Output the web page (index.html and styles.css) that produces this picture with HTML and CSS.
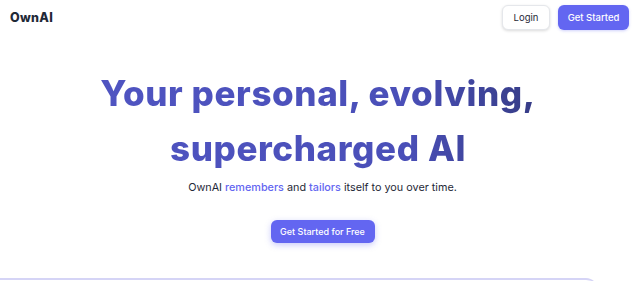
FILE: index.html
```html
<!DOCTYPE html>
<html lang="en">
<head>
	<meta charset="UTF-8">
	<title>OwnAI</title>
	<link rel="stylesheet" href="styles.css">
</head>
<body>
	<div class="nav">
		<div class="logo">OwnAI</div>
		<div class="nav-btns">
			<button class="btn-login">Login</button>
			<button class="btn-start">Get Started</button>
		</div>
	</div>
	<div class="hero">
		<h1 class="title">Your personal, evolving,<br>supercharged AI</h1>
		<p class="sub">OwnAI <span class="hl">remembers</span> and <span class="hl">tailors</span> itself to you over time.</p>
		<button class="btn-free">Get Started for Free</button>
	</div>
	<div class="card"></div>
</body>
</html>
```

FILE: styles.css
```css
body{
	margin: 0; font-family: "Inter", "Noto Sans", sans-serif; background: #fff; color: #1f2937; overflow: hidden; height: 281px;
}
.nav{
	display: flex; justify-content: space-between; align-items: center; padding: 5px 7px 0 10px; height: 25px;
}
.logo{
	font-size: 12.5px; font-weight: 800; color: #1f2937; letter-spacing: 0.3px;
}
.nav-btns{
	display: flex; gap: 8px;
}
button{
	font-family: inherit; cursor: pointer;
}
.btn-login{
	width: 48px; height: 25px; background: #fff; border: 1px solid #e5e7eb; border-radius: 6px; font-size: 9.5px; color: #1f2937; box-shadow: 0 1px 3px rgba(0,0,0,0.15);
}
.btn-start{
	width: 71px; height: 25px; background: #6366f1; border: none; border-radius: 6px; font-size: 9.5px; color: #fff; font-weight: 500; box-shadow: 0 1px 3px rgba(99,102,241,0.3);
}
.hero{
	display: flex; flex-direction: column; align-items: center; padding-top: 36px;
}
.title{
	margin: 0; text-align: center; font-size: 35px; line-height: 55px; font-weight: 800; letter-spacing: 0.6px;
	background: linear-gradient(90deg, #4f54c1 0%, #4a4fb8 70%, #363c86 100%); -webkit-background-clip: text; background-clip: text; color: transparent;
}
.sub{
	margin: 5px 0 0 9px; font-size: 10.8px; line-height: 14px; color: #1f2937;
}
.hl{
	color: #6366f1; font-weight: 500;
}
.btn-free{
	margin: 25px 0 0 9px; width: 104px; height: 23px; background: #6366f1; border: none; border-radius: 6px; font-size: 9px; color: #fff; font-weight: 500; box-shadow: 0 2px 6px rgba(99,102,241,0.35);
}
.card{
	position: absolute; left: 0; top: 278px; width: 598px; height: 10px; border-top: 2px solid #d5d4f6; border-radius: 0 12px 0 0;
	background: linear-gradient(90deg, transparent 90%, #fff 100%);
}
```
